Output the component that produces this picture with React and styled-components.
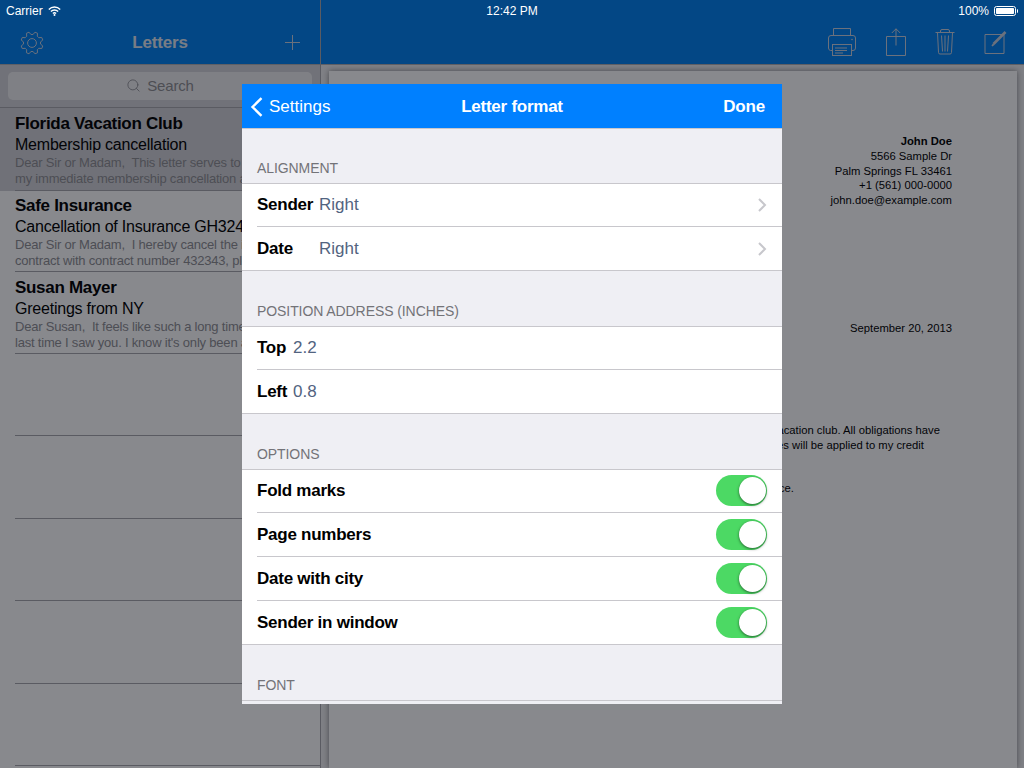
import React from "react";
import styled, { createGlobalStyle } from "styled-components";
import { Search } from "lucide-react";

const GlobalStyle = createGlobalStyle`
  html, body {
    margin: 0;
    padding: 0;
    background: #000;
  }
  body {
    font-family: "Liberation Sans", Arial, sans-serif;
  }
`;

const Screen = styled.div`
  position: relative;
  width: 1024px;
  height: 768px;
  overflow: hidden;
  display: flex;
  background: #fff;
`;

const StatusBar = styled.div`
  position: absolute;
  top: 0;
  left: 0;
  right: 0;
  z-index: 3;
  height: 21px;
  padding: 1px 6px 0;
  box-sizing: border-box;
  display: grid;
  grid-template-columns: 1fr auto 1fr;
  align-items: center;
  color: #fff;
  font-size: 12px;
`;

const StatusSide = styled.div`
  display: flex;
  align-items: center;
  gap: 5px;
  justify-content: ${(p) => (p.$right ? "flex-end" : "flex-start")};
`;

const Backdrop = styled.div`
  position: absolute;
  inset: 0;
  z-index: 1;
  background: rgba(6, 8, 16, 0.48);
`;

const Sidebar = styled.div`
  width: 320px;
  flex: none;
  display: flex;
  flex-direction: column;
`;

const SideNav = styled.div`
  height: 43px;
  padding: 21px 20px 0 20px;
  display: grid;
  grid-template-columns: 1fr auto 1fr;
  align-items: center;
  background: #0080f0;
  border-bottom: 1px solid #b0b0b4;
`;

const NavSlot = styled.div`
  display: flex;
  justify-content: ${(p) => (p.$right ? "flex-end" : "flex-start")};
`;

const NavTitle = styled.div`
  font-size: 17px;
  font-weight: 700;
  letter-spacing: -0.15px;
  color: #e0e8f0;
`;

const SearchArea = styled.div`
  height: 43px;
  padding: 7px 8px;
  box-sizing: border-box;
  background: #d4d4d8;
  border-bottom: 1px solid #a8a8ac;
`;

const SearchField = styled.div`
  height: 28px;
  box-sizing: border-box;
  padding-bottom: 2px;
  border-radius: 5px;
  background: #eeeef0;
  color: #8e8e93;
  font-size: 15px;
  letter-spacing: -0.15px;
  display: flex;
  align-items: center;
  justify-content: center;
  gap: 6px;
`;

const LetterRow = styled.div`
  height: ${(p) => p.$height}px;
  box-sizing: border-box;
  padding: ${(p) => p.$top}px 0 0 15px;
  background: ${(p) => (p.$selected ? "#d2d2d6" : "#fff")};
  white-space: pre;
  position: relative;
  &::after {
    content: "";
    position: absolute;
    left: 15px;
    right: 0;
    bottom: 0;
    height: 1px;
    background: #a8a8ac;
  }
`;

const LetterName = styled.div`
  font-size: 17px;
  line-height: 20px;
  font-weight: 700;
  letter-spacing: -0.3px;
  color: #000;
`;

const LetterSubject = styled.div`
  font-size: 16px;
  line-height: 21px;
  letter-spacing: -0.22px;
  color: #000;
`;

const LetterPreview = styled.div`
  font-size: 13px;
  line-height: 16px;
  letter-spacing: -0.2px;
  color: #8e8e93;
`;

const Detail = styled.div`
  flex: 1;
  display: flex;
  flex-direction: column;
  border-left: 1px solid #a8a8ac;
`;

const DetailNav = styled.div`
  height: 44px;
  padding: 20px 16px 0 0;
  display: flex;
  align-items: center;
  justify-content: flex-end;
  gap: 29px;
  background: #0080f0;
  border-bottom: 1px solid #b0b0b4;
`;

const Desk = styled.div`
  flex: 1;
  padding: 6px 7px 0 8px;
  background: #eeeef0;
`;

const Paper = styled.div`
  height: 100%;
  box-sizing: border-box;
  padding: 63px 65px 0 0;
  background: #fff;
  color: #000;
  font-size: 11.25px;
  line-height: 14.8px;
  text-align: right;
  white-space: nowrap;
  box-shadow: 0 0 6px rgba(0, 0, 0, 0.45);
`;

const SenderName = styled.div`
  font-weight: 700;
`;

const LetterDate = styled.div`
  margin-top: 113px;
`;

const BodyLine = styled.div`
  margin-top: ${(p) => p.$top || 0}px;
  padding-right: ${(p) => p.$inset}px;
`;

const Modal = styled.div`
  position: absolute;
  z-index: 2;
  top: 84px;
  left: 242px;
  width: 540px;
  height: 620px;
  overflow: hidden;
  background: #efeff4;
`;

const ModalNav = styled.div`
  height: 43px;
  display: grid;
  grid-template-columns: 1fr auto 1fr;
  align-items: center;
  padding: 1px 17px 0;
  background: #0080ff;
  color: #fff;
  font-size: 17px;
  border-bottom: 1px solid #c8c7cc;
`;

const BackButton = styled.div`
  margin-left: -9px;
  display: flex;
  align-items: center;
  gap: 6px;
`;

const ModalTitle = styled.div`
  font-weight: 700;
  letter-spacing: -0.25px;
`;

const DoneButton = styled.div`
  font-weight: 700;
  letter-spacing: -0.2px;
  text-align: right;
`;

const SectionLabel = styled.div`
  height: ${(p) => (p.$first ? 55 : 56)}px;
  box-sizing: border-box;
  padding: 0 15px 7px;
  display: flex;
  align-items: flex-end;
  font-size: 14px;
  line-height: 16px;
  letter-spacing: -0.08px;
  color: #737378;
  text-transform: uppercase;
  border-bottom: 1px solid #c8c7cc;
`;

const Group = styled.div`
  background: #fff;
  border-bottom: 1px solid #c8c7cc;
`;

const Switch = styled.div`
  position: relative;
  width: 51px;
  height: 31px;
  border-radius: 16px;
  background: #4cd964;
`;

const Knob = styled.div`
  position: absolute;
  top: 2px;
  right: 1px;
  width: 27px;
  height: 27px;
  border-radius: 50%;
  background: #fff;
  box-shadow: 0 1px 3px rgba(0, 0, 0, 0.55);
`;

const Row = styled.div`
  height: 44px;
  box-sizing: border-box;
  margin-left: 15px;
  padding-right: 15px;
  display: flex;
  align-items: center;
  font-size: 17px;
  &:not(:last-child) {
    border-bottom: 1px solid #c8c7cc;
  }
  &:first-child,
  &:last-child {
    height: 43px;
  }
  &:first-child ${Switch} {
    margin-top: -1px;
  }
`;

const RowLabel = styled.div`
  width: ${(p) => (p.$width ? `${p.$width}px` : "auto")};
  font-weight: 700;
  letter-spacing: -0.25px;
  color: #000;
`;

const RowValue = styled.div`
  flex: 1;
  color: #526380;
`;

const RowTitle = styled(RowLabel)`
  flex: 1;
`;

// gear outline with small teeth, like the iOS 7 toolbar glyph
function gearPath() {
  const teeth = 8;
  const points = [];
  for (let i = 0; i < teeth; i++) {
    const a = (i / teeth) * Math.PI * 2 + Math.PI / 8;
    const step = (Math.PI * 2) / teeth;
    [
      [-0.34, 8.6],
      [-0.16, 11.2],
      [0.16, 11.2],
      [0.34, 8.6],
    ].forEach(([k, r]) => {
      const t = a + k * step;
      points.push(`${(12 + Math.cos(t) * r).toFixed(2)} ${(12 + Math.sin(t) * r).toFixed(2)}`);
    });
  }
  return `M${points.join("L")}Z`;
}

const navIcon = "#c8d2e0";

function GearIcon() {
  return (
    <svg width="24" height="24" viewBox="0 0 24 24" fill="none" stroke={navIcon} strokeWidth="1">
      <path d={gearPath()} strokeLinejoin="round" />
      <circle cx="12" cy="12" r="4.4" />
    </svg>
  );
}

function PlusIcon() {
  return (
    <svg width="15" height="15" viewBox="0 0 15 15" stroke={navIcon} strokeWidth="1">
      <path d="M7.5 0V15M0 7.5H15" />
    </svg>
  );
}

function PrinterIcon() {
  return (
    <svg width="30" height="30" viewBox="0 0 30 30" fill="none" stroke={navIcon} strokeWidth="1">
      <path d="M6.5 8.5V1.5H23.5V8.5" />
      <path d="M5.5 23.5H3.5A2.5 2.5 0 0 1 1.5 21V11A2.5 2.5 0 0 1 4 8.5H26A2.5 2.5 0 0 1 28.5 11V21A2.5 2.5 0 0 1 26 23.5H24.5" />
      <rect x="5.5" y="17.5" width="19" height="11" />
      <path d="M8 21H20M8 23.5H20M8 26H16" strokeWidth="1" />
      <circle cx="25" cy="12.5" r="0.8" fill={navIcon} stroke="none" />
    </svg>
  );
}

function ShareIcon() {
  return (
    <svg width="20" height="28" viewBox="0 0 20 28" fill="none" stroke={navIcon} strokeWidth="1">
      <path d="M0.5 8.5H19.5V27.5H0.5Z" />
      <path d="M10 0.8V17.5M5.8 5L10 0.8L14.2 5" />
    </svg>
  );
}

function TrashIcon() {
  return (
    <svg width="20" height="26" viewBox="0 0 20 26" fill="none" stroke={navIcon} strokeWidth="1">
      <path d="M0.5 3.5H19.5M5.5 3.5V2A1.5 1.5 0 0 1 7 0.5H13A1.5 1.5 0 0 1 14.5 2V3.5" />
      <path d="M2.5 3.5L3.5 23.5A1.5 1.5 0 0 0 5 25H15A1.5 1.5 0 0 0 16.5 23.5L17.5 3.5" />
      <path d="M6.5 6.5L7.5 22.5M10 6.5V22.5M13.5 6.5L12.5 22.5" />
    </svg>
  );
}

function ComposeIcon() {
  return (
    <svg width="24" height="24" viewBox="0 0 24 24" fill="none" stroke={navIcon} strokeWidth="1">
      <path d="M1 4.5H20V23.5H1Z" />
      <path d="M9.5 14L21.5 2" strokeWidth="2.6" />
      <path d="M9.5 14L8 16L10 14.5" strokeWidth="1.4" />
    </svg>
  );
}

function WifiIcon() {
  return (
    <svg width="13" height="10" viewBox="0 0 13 10" fill="none" stroke="#fff" strokeWidth="1.4">
      <path d="M0.8 3.4A8 8 0 0 1 12.2 3.4" />
      <path d="M2.9 5.6A5 5 0 0 1 10.1 5.6" />
      <path d="M4.9 7.6A2.3 2.3 0 0 1 8.1 7.6" />
      <circle cx="6.5" cy="9" r="1" fill="#fff" stroke="none" />
    </svg>
  );
}

function BatteryIcon() {
  return (
    <svg width="24" height="10" viewBox="0 0 24 10">
      <rect x="0.5" y="0.5" width="21" height="9" rx="2" fill="none" stroke="#fff" />
      <rect x="2" y="2" width="18" height="6" rx="0.8" fill="#fff" />
      <path d="M23 3.2V6.8A1.6 1.6 0 0 0 23 3.2Z" fill="#fff" />
    </svg>
  );
}

function BackChevron() {
  return (
    <svg width="13" height="20" viewBox="0 0 13 20" fill="none" stroke="#fff" strokeWidth="2.4">
      <path d="M11.5 1.2L2.5 10L11.5 18.8" />
    </svg>
  );
}

function RowChevron() {
  return (
    <svg width="10" height="14" viewBox="0 0 10 14" fill="none" stroke="#c7c7cc" strokeWidth="2">
      <path d="M2 1L8 7L2 13" />
    </svg>
  );
}

const letters = [
  {
    name: "Florida Vacation Club",
    subject: "Membership cancellation",
    preview: ["Dear Sir or Madam,  This letter serves to inform you of", "my immediate membership cancellation as of today."],
    selected: true,
    height: 83,
    top: 6,
  },
  {
    name: "Safe Insurance",
    subject: "Cancellation of Insurance GH3243",
    preview: ["Dear Sir or Madam,  I hereby cancel the insurance", "contract with contract number 432343, please confirm."],
    height: 81,
    top: 5,
  },
  {
    name: "Susan Mayer",
    subject: "Greetings from NY",
    preview: ["Dear Susan,  It feels like such a long time since the", "last time I saw you. I know it's only been a few months."],
    height: 82,
    top: 6,
  },
  { height: 82 },
  { height: 83 },
  { height: 82 },
  { height: 83 },
  { height: 82 },
];

function Toggle() {
  return (
    <Switch>
      <Knob />
    </Switch>
  );
}

export default function App() {
  return (
    <Screen>
      <GlobalStyle />
      <StatusBar>
        <StatusSide>
          <span>Carrier</span>
          <WifiIcon />
        </StatusSide>
        <span>12:42 PM</span>
        <StatusSide $right>
          <span>100%</span>
          <BatteryIcon />
        </StatusSide>
      </StatusBar>

      <Sidebar>
        <SideNav>
          <NavSlot>
            <GearIcon />
          </NavSlot>
          <NavTitle>Letters</NavTitle>
          <NavSlot $right>
            <PlusIcon />
          </NavSlot>
        </SideNav>
        <SearchArea>
          <SearchField>
            <Search size={15} strokeWidth={1.4} color="#8e8e93" />
            <span>Search</span>
          </SearchField>
        </SearchArea>
        {letters.map((l, i) => (
          <LetterRow key={i} $height={l.height} $top={l.top || 0} $selected={l.selected}>
            {l.name && (
              <>
                <LetterName>{l.name}</LetterName>
                <LetterSubject>{l.subject}</LetterSubject>
                {l.preview.map((line) => (
                  <LetterPreview key={line}>{line}</LetterPreview>
                ))}
              </>
            )}
          </LetterRow>
        ))}
      </Sidebar>

      <Detail>
        <DetailNav>
          <PrinterIcon />
          <ShareIcon />
          <TrashIcon />
          <ComposeIcon />
        </DetailNav>
        <Desk>
          <Paper>
            <SenderName>John Doe</SenderName>
            <div>5566 Sample Dr</div>
            <div>Palm Springs FL 33461</div>
            <div>+1 (561) 000-0000</div>
            <div>john.doe@example.com</div>
            <LetterDate>September 20, 2013</LetterDate>
            <BodyLine $top={87} $inset={12}>
              I hereby cancel my membership in the vacation club. All obligations have
            </BodyLine>
            <BodyLine $inset={28}>been fulfilled and remaining fees will be applied to my credit</BodyLine>
            <BodyLine $top={29} $inset={158}>Thank you for your assistance.</BodyLine>
          </Paper>
        </Desk>
      </Detail>

      <Backdrop />

      <Modal>
        <ModalNav>
          <BackButton>
            <BackChevron />
            <span>Settings</span>
          </BackButton>
          <ModalTitle>Letter format</ModalTitle>
          <DoneButton>Done</DoneButton>
        </ModalNav>

        <SectionLabel $first>Alignment</SectionLabel>
        <Group>
          <Row>
            <RowLabel $width={62}>Sender</RowLabel>
            <RowValue>Right</RowValue>
            <RowChevron />
          </Row>
          <Row>
            <RowLabel $width={62}>Date</RowLabel>
            <RowValue>Right</RowValue>
            <RowChevron />
          </Row>
        </Group>

        <SectionLabel>Position address (inches)</SectionLabel>
        <Group>
          <Row>
            <RowLabel $width={36}>Top</RowLabel>
            <RowValue>2.2</RowValue>
          </Row>
          <Row>
            <RowLabel $width={36}>Left</RowLabel>
            <RowValue>0.8</RowValue>
          </Row>
        </Group>

        <SectionLabel>Options</SectionLabel>
        <Group>
          {["Fold marks", "Page numbers", "Date with city", "Sender in window"].map((o) => (
            <Row key={o}>
              <RowTitle>{o}</RowTitle>
              <Toggle />
            </Row>
          ))}
        </Group>

        <SectionLabel>Font</SectionLabel>
      </Modal>
    </Screen>
  );
}
